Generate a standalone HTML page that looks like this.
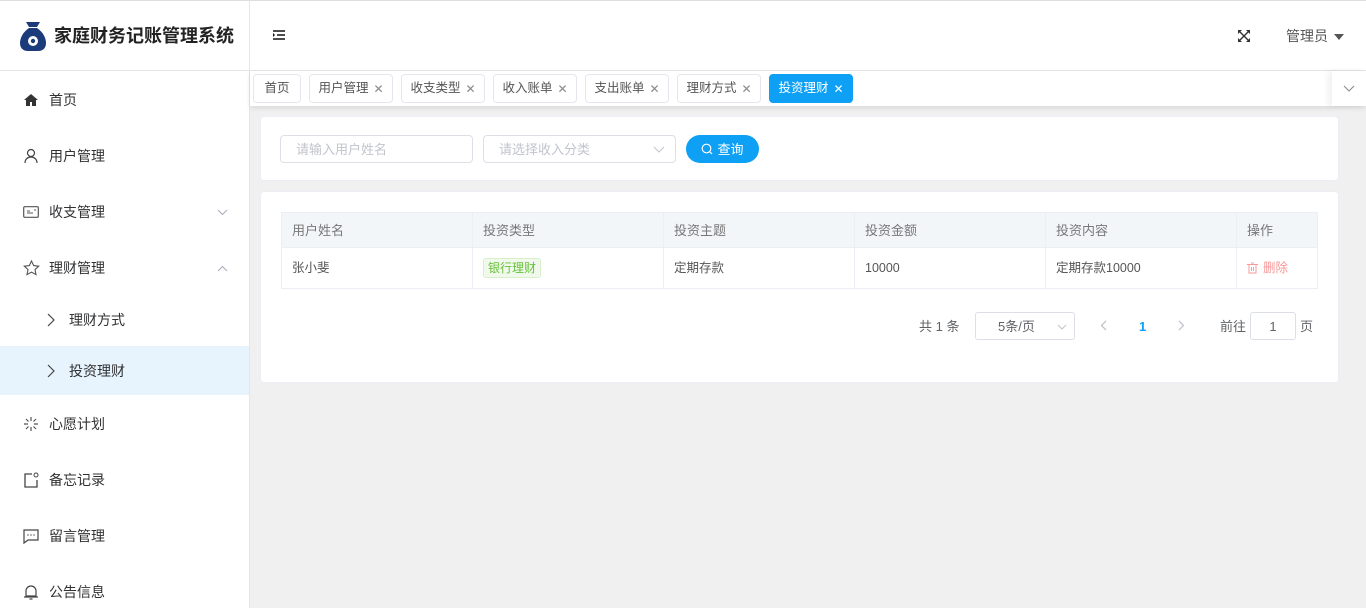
<!DOCTYPE html>
<html><head><meta charset="utf-8"><style>
*{box-sizing:border-box;margin:0;padding:0}
html,body{width:1366px;height:608px;overflow:hidden}
body{background:#f0f0f0;font-family:"Liberation Sans","Noto Sans CJK SC",sans-serif;font-size:13px;color:#333;position:relative;line-height:1}
.abs{position:absolute}
.side{left:0;top:0;width:250px;height:608px;background:#fff;border-right:1px solid #e6e6e6;border-top:1px solid #ddd}
.logo{left:0;top:0;width:249px;height:71px;border-bottom:1px solid #e6e6e6;border-top:1px solid #ddd}
.hdr{left:250px;top:0;width:1116px;height:71px;background:#fff;border-bottom:1px solid #e6e6e6;border-top:1px solid #ddd}
.mi{position:absolute;left:0;width:249px;height:56px;display:flex;align-items:center;font-size:14px;color:#303133}
.mi svg{position:absolute;left:23px}
.mi span{position:absolute;left:49px}
.tag{position:absolute;top:74px;height:29px;border:1px solid #e4e7ed;border-radius:4px;background:#fff;font-size:12.5px;color:#555;display:flex;align-items:center;justify-content:center;white-space:nowrap;padding:0}
.tag i{font-style:normal;margin-left:5px;color:#888;font-size:12px}
.card{background:#fff;border-radius:4px;border:1px solid #ebeef5}
.inp{position:absolute;height:28px;border:1px solid #dcdfe6;border-radius:4px;color:#c0c4cc;font-size:13px;display:flex;align-items:center;padding-left:15px}
.th,.td{position:absolute;display:flex;align-items:center;padding-left:10px;border-right:1px solid #ebeef5;white-space:nowrap}
.th{top:212px;height:36px;background:#f3f6f9;color:#777;font-size:13px;border-bottom:1px solid #ebeef5;border-top:1px solid #ebeef5}
.td{top:248px;height:41px;border-bottom:1px solid #ebeef5;color:#555;font-size:12.5px}
</style></head><body>
<div class="abs side"></div>
<div class="abs logo">
<svg class="abs" style="left:20px;top:20px" width="26" height="30" viewBox="0 0 26 30"><path d="M6 1h14l-3 5H9z" fill="#1c3b7a"/><path d="M9 7h8c6 4 9 10 9 15 0 5-3 8-8 8H8c-5 0-8-3-8-8 0-5 3-11 9-15z" fill="#1c3b7a"/><circle cx="13" cy="20" r="5" fill="#fff"/><circle cx="13" cy="20" r="2.2" fill="#1c3b7a"/></svg>
<div class="abs" style="left:54px;top:26px;font-size:18px;font-weight:bold;color:#222;white-space:nowrap">家庭财务记账管理系统</div>
</div>
<div class="abs hdr">
<svg class="abs" style="left:23px;top:29px" width="12" height="10" viewBox="0 0 12 10"><path d="M0 1h12M4 5h8M0 9h12" stroke="#111" stroke-width="1.6"/><path d="M0 3l2 2-2 2z" fill="#111"/></svg>
<svg class="abs" style="left:988px;top:29px" width="12" height="12" viewBox="0 0 12 12"><path d="M2 2l8 8M10 2l-8 8" stroke="#333" stroke-width="1.4"/><path d="M0 0h4L0 4zM12 0v4L8 0zM0 12V8l4 4zM12 12H8l4-4z" fill="#333"/></svg>
<div class="abs" style="left:1036px;top:28px;font-size:14px;color:#555">管理员</div>
<svg class="abs" style="left:1084px;top:33px" width="10" height="6"><path d="M0 0h10L5 6z" fill="#555"/></svg>
</div>
<div class="abs" style="left:250px;top:71px;width:1116px;height:35px;background:#fff;box-shadow:0 2px 5px rgba(0,0,0,.1)"></div>
<div class="abs" style="left:1332px;top:71px;width:34px;height:35px;background:#fff;box-shadow:-4px 0 6px rgba(0,0,0,.06)"><svg class="abs" style="left:11px;top:14px" width="12" height="7"><path d="M1 1l5 5 5-5" stroke="#888" fill="none"/></svg></div>
<div class="tag" style="left:253px;width:48px">首页</div>
<div class="tag" style="left:309px;width:84px">用户管理<i>✕</i></div>
<div class="tag" style="left:401px;width:84px">收支类型<i>✕</i></div>
<div class="tag" style="left:493px;width:84px">收入账单<i>✕</i></div>
<div class="tag" style="left:585px;width:84px">支出账单<i>✕</i></div>
<div class="tag" style="left:677px;width:84px">理财方式<i>✕</i></div>
<div class="tag" style="left:769px;width:84px;background:#0ea0f5;border-color:#0ea0f5;color:#fff">投资理财<i style="color:#fff">✕</i></div>

<div class="mi" style="top:72px"><svg width="16" height="14" viewBox="0 0 16 14"><path d="M8 1L1 7h2v6h4V9h2v4h4V7h2z" fill="#333"/></svg><span>首页</span></div>
<div class="mi" style="top:128px"><svg width="16" height="16" viewBox="0 0 16 16"><circle cx="8" cy="5" r="3.5" stroke="#444" fill="none" stroke-width="1.2"/><path d="M2 15c0-4 3-6 6-6s6 2 6 6" stroke="#444" fill="none" stroke-width="1.2"/></svg><span>用户管理</span></div>
<div class="mi" style="top:184px"><svg width="16" height="14" viewBox="0 0 16 14"><rect x=".7" y="1.7" width="14.6" height="10.6" rx="1" stroke="#555" fill="none" stroke-width="1.2"/><path d="M4 8h6M4 6h3M11 5h2" stroke="#555"/></svg><span>收支管理</span><svg style="left:217px" width="11" height="7"><path d="M1 1l4.5 4.5L10 1" stroke="#aab" fill="none"/></svg></div>
<div class="mi" style="top:240px"><svg width="17" height="16" viewBox="0 0 17 16"><path d="M8.5 1l2.2 4.6 5 .6-3.7 3.4 1 5-4.5-2.5-4.5 2.5 1-5L1.3 6.2l5-.6z" stroke="#555" fill="none" stroke-width="1.1"/></svg><span>理财管理</span><svg style="left:217px" width="11" height="7"><path d="M1 6l4.5-4.5L10 6" stroke="#aab" fill="none"/></svg></div>
<div class="mi" style="top:294px;height:52px"><svg style="left:47px" width="8" height="14"><path d="M1 1l6 6-6 6" stroke="#444" fill="none" stroke-width="1.2"/></svg><span style="left:69px">理财方式</span></div>
<div class="mi" style="top:346px;height:49px;background:#e8f4fd"><svg style="left:47px" width="8" height="14"><path d="M1 1l6 6-6 6" stroke="#444" fill="none" stroke-width="1.2"/></svg><span style="left:69px">投资理财</span></div>
<div class="mi" style="top:396px"><svg width="16" height="16" viewBox="0 0 16 16"><path d="M8 1v4M8 11v4M1 8h4M11 8h4M3 3l2.5 2.5M10.5 10.5L13 13M13 3l-2.5 2.5M5.5 10.5L3 13" stroke="#555" stroke-width="1.2"/></svg><span>心愿计划</span></div>
<div class="mi" style="top:452px"><svg width="16" height="16" viewBox="0 0 16 16"><path d="M9 2H2v13h12V8" stroke="#444" fill="none" stroke-width="1.3"/><circle cx="13" cy="3" r="2" stroke="#444" fill="none"/></svg><span>备忘记录</span></div>
<div class="mi" style="top:508px"><svg width="16" height="16" viewBox="0 0 16 16"><path d="M1 2h14v10H5l-4 3z" stroke="#444" fill="none" stroke-width="1.2"/><path d="M4.5 7h1M7.5 7h1M10.5 7h1" stroke="#444" stroke-width="1.5"/></svg><span>留言管理</span></div>
<div class="mi" style="top:564px"><svg width="16" height="16" viewBox="0 0 16 16"><path d="M3 12V7a5 5 0 0110 0v5zM1 13h14M6.5 15h3" stroke="#444" fill="none" stroke-width="1.2"/></svg><span>公告信息</span></div>

<div class="abs card" style="left:260px;top:116px;width:1079px;height:65px"></div>
<div class="inp" style="left:280px;top:135px;width:193px">请输入用户姓名</div>
<div class="inp" style="left:483px;top:135px;width:193px">请选择收入分类<svg class="abs" style="left:169px;top:10px" width="12" height="7"><path d="M1 1l5 5 5-5" stroke="#c0c4cc" fill="none"/></svg></div>
<div class="abs" style="left:686px;top:135px;width:73px;height:28px;border-radius:14px;background:#0ea0f5;color:#fff;font-size:13px;display:flex;align-items:center;justify-content:center"><svg width="12" height="12" viewBox="0 0 12 12" style="margin-right:4px"><circle cx="5.5" cy="5.5" r="4.3" stroke="#fff" fill="none" stroke-width="1.2"/><path d="M8.5 8.5l2.5 2.5" stroke="#fff" stroke-width="1.2"/></svg>查询</div>

<div class="abs card" style="left:260px;top:191px;width:1079px;height:192px"></div>
<div class="th" style="left:281px;width:192px;border-left:1px solid #ebeef5">用户姓名</div>
<div class="th" style="left:473px;width:191px">投资类型</div>
<div class="th" style="left:664px;width:191px">投资主题</div>
<div class="th" style="left:855px;width:191px">投资金额</div>
<div class="th" style="left:1046px;width:191px">投资内容</div>
<div class="th" style="left:1237px;width:81px">操作</div>
<div class="td" style="left:281px;width:192px;border-left:1px solid #ebeef5">张小斐</div>
<div class="td" style="left:473px;width:191px"><span style="background:#f0f9eb;border:1px solid #d7f0c9;color:#67c23a;font-size:12px;padding:3px 4px;border-radius:3px">银行理财</span></div>
<div class="td" style="left:664px;width:191px">定期存款</div>
<div class="td" style="left:855px;width:191px">10000</div>
<div class="td" style="left:1046px;width:191px">定期存款10000</div>
<div class="td" style="left:1237px;width:81px;color:#f89898"><svg width="11" height="12" viewBox="0 0 11 12" style="margin-right:5px"><path d="M0 2.5h11M4 1h3M2 3v8h7V3M4.5 5v4M6.5 5v4" stroke="#f89898" fill="none"/></svg>删除</div>

<div class="abs" style="left:919px;top:320px;font-size:13px;color:#606266">共 1 条</div>
<div class="abs" style="left:975px;top:312px;width:100px;height:28px;border:1px solid #dcdfe6;border-radius:3px;font-size:13px;color:#606266;padding:7px 0 0 22px">5条/页<svg class="abs" style="left:81px;top:11px" width="10" height="6"><path d="M1 1l4 4 4-4" stroke="#c0c4cc" fill="none"/></svg></div>
<svg class="abs" style="left:1100px;top:320px" width="7" height="11"><path d="M6 1L1.5 5.5 6 10" stroke="#c0c4cc" fill="none" stroke-width="1.3"/></svg>
<div class="abs" style="left:1139px;top:320px;font-size:13px;color:#0ea0f5;font-weight:bold">1</div>
<svg class="abs" style="left:1178px;top:320px" width="7" height="11"><path d="M1 1l4.5 4.5L1 10" stroke="#c0c4cc" fill="none" stroke-width="1.3"/></svg>
<div class="abs" style="left:1220px;top:320px;font-size:13px;color:#606266">前往</div>
<div class="abs" style="left:1250px;top:312px;width:46px;height:28px;border:1px solid #dcdfe6;border-radius:3px;font-size:13px;color:#606266;text-align:center;padding-top:7px">1</div>
<div class="abs" style="left:1300px;top:320px;font-size:13px;color:#606266">页</div>
</body></html>
